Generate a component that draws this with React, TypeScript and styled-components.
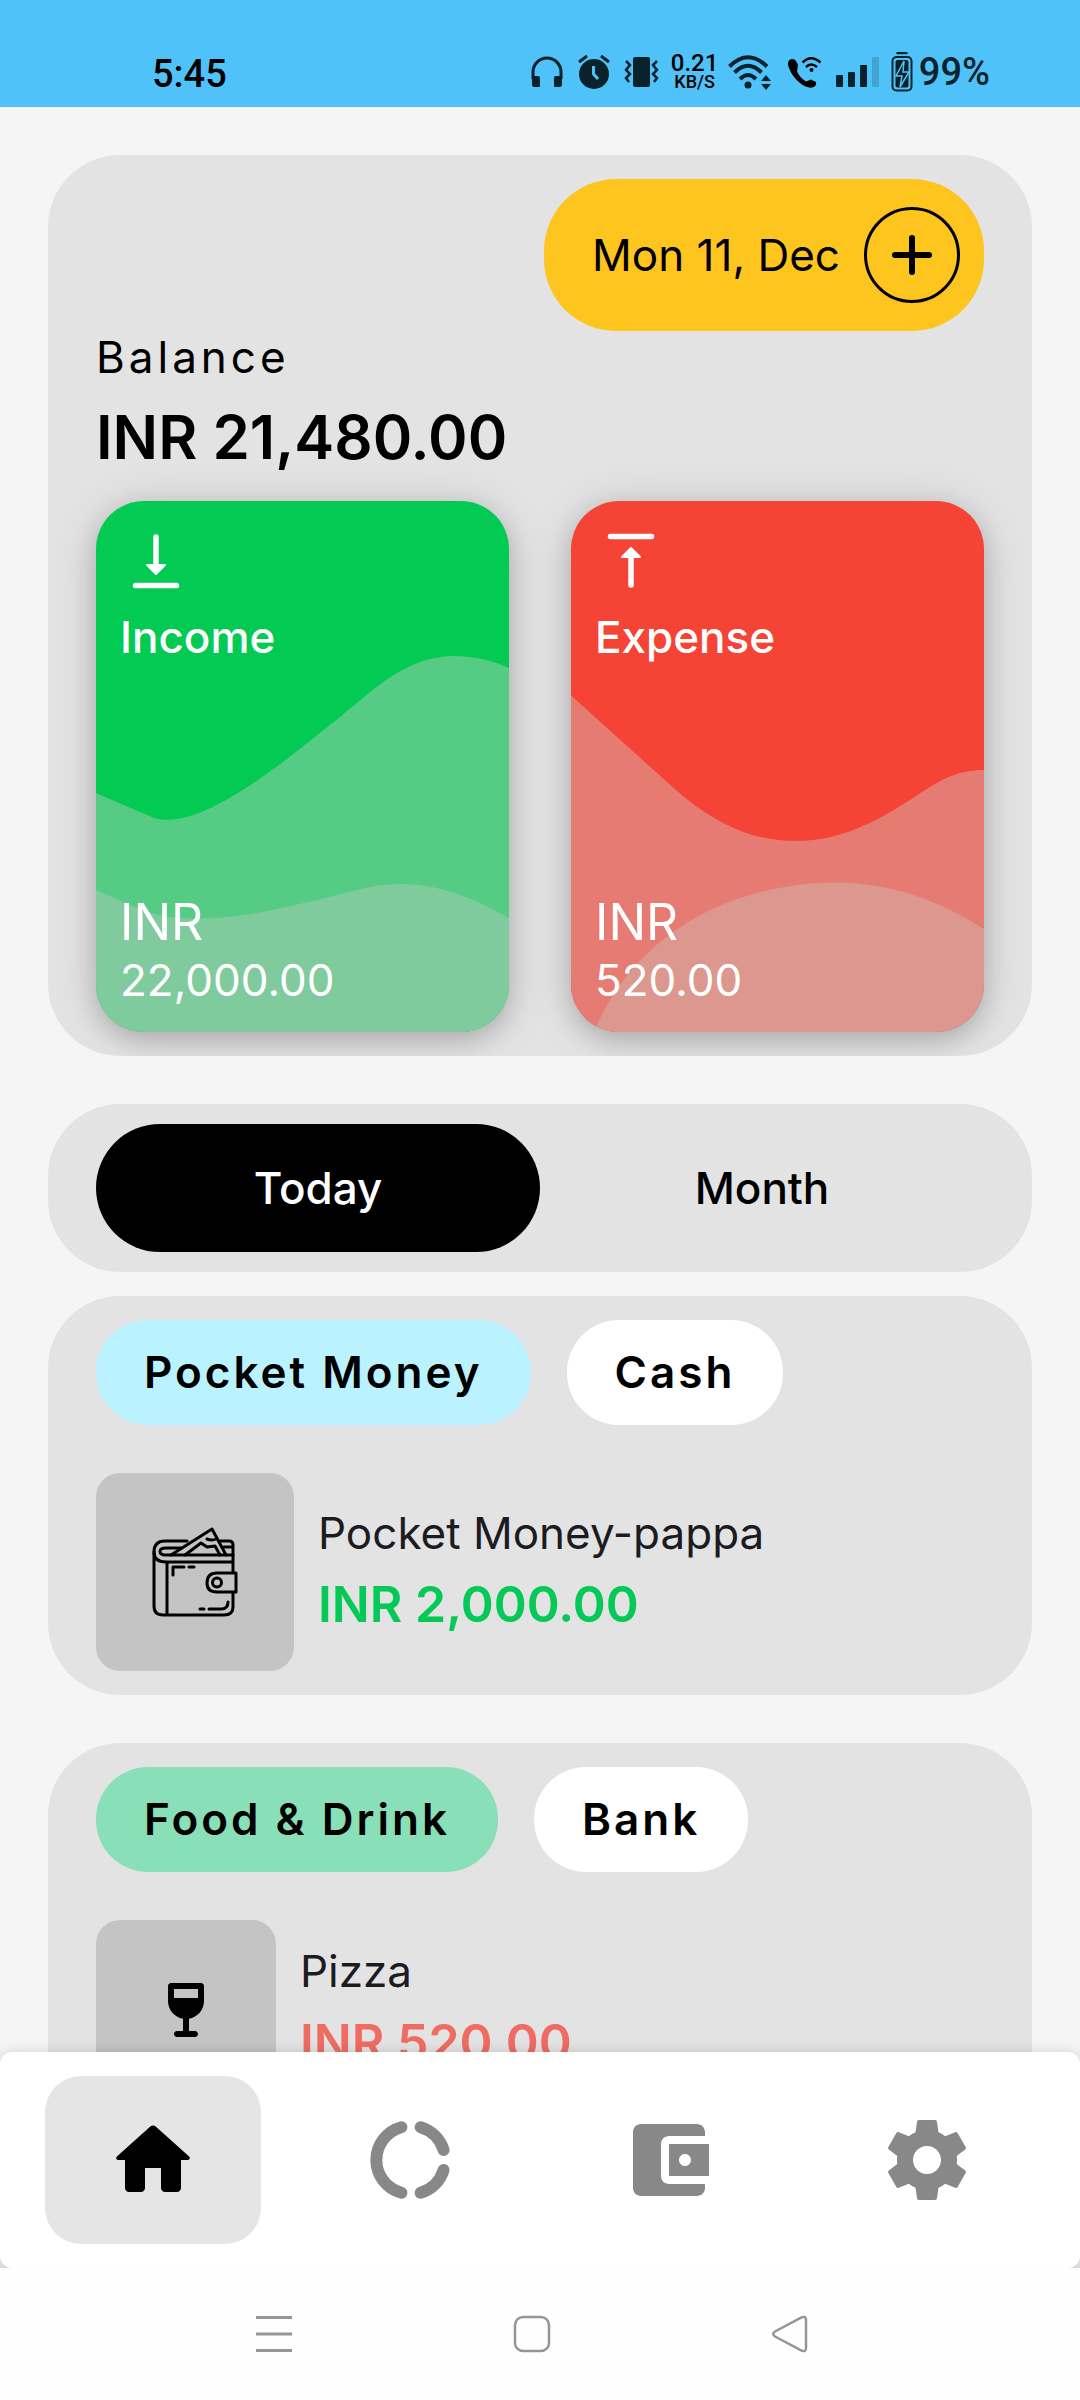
import React, { useState } from "react";
import styled, { createGlobalStyle } from "styled-components";

const sans = `Inter, "Noto Sans", "Liberation Sans", sans-serif`;
const system = `Roboto, "Noto Sans", "Liberation Sans", sans-serif`;

const GlobalStyle = createGlobalStyle`
  *, *::before, *::after { box-sizing: border-box; }
  body { margin: 0; background: #f5f5f5; font-family: ${sans}; color: #000; }
  h1, h2, p { margin: 0; font-weight: inherit; }
  button { margin: 0; padding: 0; border: 0; background: none; font: inherit; color: inherit; cursor: pointer; }
  svg { display: block; flex: none; }
`;

const Screen = styled.div`
  display: flex;
  flex-direction: column;
  height: 100vh;
  background: #f5f5f5;
`;

/* ---------- status bar ---------- */

const StatusBar = styled.header`
  display: flex;
  justify-content: space-between;
  align-items: flex-end;
  flex: none;
  height: 107px;
  padding: 0 90px 10px 152px;
  background: #4fc3f9;
  font-family: ${system};
`;

const Clock = styled.time`
  font-size: 38px;
  line-height: 46px;
  font-weight: 500;
`;

const StatusIcons = styled.div`
  display: flex;
  align-items: center;
  gap: 12px;
  height: 50px;
  color: #0a222c;
`;

const NetSpeed = styled.div`
  display: grid;
  justify-items: center;
  width: 44px;
  color: #000;
  font-weight: 500;
  white-space: nowrap;
`;

const SpeedValue = styled.div`
  font-size: 24px;
  line-height: 20px;
`;

const SpeedUnit = styled.div`
  font-size: 18px;
  line-height: 18px;
`;

const Battery = styled.div`
  display: flex;
  align-items: center;
  gap: 6px;
  font-size: 38px;
  line-height: 46px;
  font-weight: 500;
`;

/* ---------- content ---------- */

const Content = styled.main`
  flex: 1;
  min-height: 0;
  padding: 48px;
  overflow-y: auto;
  scrollbar-width: none;
`;

const Panel = styled.section`
  padding: 24px 48px;
  border-radius: 72px;
  background: #e3e3e3;
  overflow: hidden;
`;

const DateButton = styled.button`
  display: flex;
  align-items: center;
  gap: 24px;
  margin-left: auto;
  padding: 28px 24px 28px 48px;
  border-radius: 72px;
  background: #fdc51e;
  font-size: 44px;
  line-height: 60px;
`;

const PlusRing = styled.span`
  display: grid;
  place-items: center;
  width: 96px;
  height: 96px;
  border: 3px solid #000;
  border-radius: 50%;
`;

const BalanceLabel = styled.p`
  font-size: 44px;
  line-height: 52px;
  letter-spacing: 4px;
`;

const BalanceAmount = styled.h1`
  margin: 14px 0 24px;
  font-size: 60px;
  line-height: 80px;
  font-weight: 600;
`;

const Flows = styled.div`
  display: grid;
  grid-template-columns: 1fr 1fr;
  gap: 62px;
`;

const FlowCard = styled.article<{ $color: string }>`
  display: grid;
  aspect-ratio: 7 / 9;
  border-radius: 48px;
  overflow: hidden;
  background: ${(p) => p.$color};
  color: #fff;
  box-shadow: 0 8px 24px rgba(0, 0, 0, 0.18), 0 4px 48px rgba(0, 0, 0, 0.12);

  > * {
    grid-area: 1 / 1;
    min-height: 0;
  }
`;

const Waves = styled.svg`
  width: 100%;
  height: 100%;
`;

const FlowBody = styled.div`
  display: flex;
  flex-direction: column;
  padding: 24px;
  z-index: 1;
`;

const FlowTitle = styled.h2`
  margin: 10px 0 auto;
  font-size: 44px;
  line-height: 60px;
  font-weight: 500;
`;

const FlowCurrency = styled.div`
  font-size: 50px;
  line-height: 60px;
`;

const FlowValue = styled.div`
  font-size: 44px;
  line-height: 56px;
`;

const TabPanel = styled.div`
  display: flex;
  margin: 48px 0 24px;
  padding: 20px 48px;
  border-radius: 72px;
  background: #e3e3e3;
`;

const Tab = styled.button<{ $active: boolean }>`
  flex: 1;
  padding: 34px 0;
  border-radius: 64px;
  background: ${(p) => (p.$active ? "#000" : "transparent")};
  color: ${(p) => (p.$active ? "#fff" : "#000")};
  font-size: 44px;
  line-height: 60px;
  font-weight: 500;
`;

const Entries = styled.div`
  display: flex;
  flex-direction: column;
  gap: 48px;
`;

const Chips = styled.div`
  display: flex;
  gap: 36px;
  margin-bottom: 48px;
`;

const Chip = styled.span<{ $color: string }>`
  padding: 24px 48px;
  border-radius: 52px;
  background: ${(p) => p.$color};
  font-size: 44px;
  line-height: 57px;
  font-weight: 600;
  letter-spacing: 3px;
`;

const EntryRow = styled.div`
  display: flex;
  align-items: center;
  gap: 24px;
`;

const Thumb = styled.div`
  padding: 54px;
  border-radius: 24px;
  background: #c4c4c4;
`;

const EntryText = styled.div`
  display: flex;
  flex-direction: column;
  gap: 8px;
  padding-bottom: 4px;
`;

const EntryName = styled.h2`
  font-size: 44px;
  line-height: 60px;
  color: #1c1b1f;
`;

const EntryAmount = styled.p<{ $color: string }>`
  font-size: 50px;
  line-height: 66px;
  font-weight: 600;
  color: ${(p) => p.$color};
`;

/* ---------- bottom bars ---------- */

const NavWrap = styled.div`
  position: relative;
  flex: none;
`;

const NavBar = styled.nav`
  display: flex;
  gap: 42px;
  padding: 24px 45px;
  border-radius: 12px;
  background: #fff;
  box-shadow: 0 4px 16px rgba(0, 0, 0, 0.26);
`;

const NavItem = styled.button<{ $active: boolean }>`
  display: grid;
  place-items: center;
  flex: 1;
  height: 168px;
  border-radius: 36px;
  background: ${(p) => (p.$active ? "#e5e5e5" : "transparent")};
  color: ${(p) => (p.$active ? "#000" : "#888")};
`;

const SystemBar = styled.footer`
  position: relative;
  display: flex;
  justify-content: center;
  flex: none;
  padding-right: 16px;
  background: #fefefe;
`;

const SystemButton = styled.button`
  display: grid;
  place-items: center;
  width: 258px;
  height: 132px;
  color: #969696;
`;

/* ---------- drawings ---------- */

const Headphones = () => (
  <svg width="36" height="36" viewBox="0 0 36 36" fill="none">
    <path d="M4 25V18a14 14 0 0 1 28 0v7" stroke="currentColor" strokeWidth="3" />
    <path d="M3 22h6q2 0 2 2v8q0 1-1 1H5q-2 0-2-2zM33 22h-6q-2 0-2 2v8q0 1 1 1h5q2 0 2-2z" fill="currentColor" />
  </svg>
);

const Alarm = () => (
  <svg width="34" height="36" viewBox="0 0 34 36" fill="none">
    <circle cx="17" cy="20" r="15" fill="currentColor" />
    <path d="M2 8l8-6M32 8l-8-6" stroke="currentColor" strokeWidth="3" />
    <path d="M16.500 12v8l4.500 5" stroke="#4fc3f9" strokeWidth="3" />
  </svg>
);

const Vibrate = () => (
  <svg width="36" height="32" viewBox="0 0 36 32" fill="none" stroke="currentColor" strokeWidth="2.500">
    <rect x="10" y="1" width="17" height="30" rx="2" fill="currentColor" stroke="none" />
    <path d="M3 5l4 4-4 5 4 4-4 4 3 4M34 5l-4 4 4 5-4 4 4 4-3 4" />
  </svg>
);

const Wifi = () => (
  <svg width="46" height="36" viewBox="0 0 46 36" fill="none" stroke="currentColor" strokeWidth="4">
    <path d="M2.500 12.500Q21 -6 40 12.500M7.500 18.500Q21 5 34.500 18.500M13 25Q21 17 29 25" />
    <circle cx="21" cy="31" r="3.500" fill="currentColor" stroke="none" />
    <path d="M34 27l5-6 5 6zM34 30l5 6 5-6z" fill="currentColor" stroke="none" />
  </svg>
);

const WifiCall = () => (
  <svg width="38" height="34" viewBox="0 0 38 34" fill="none" stroke="#000">
    <path
      d="M7.500 4C3 4 2 8 4 13C7 21 14 29 22 32C28 34 32 31 31 27L26 24.500L21 26.500C17 24 14 21 12 16.500L13 10C11.500 6 10 4 7.500 4Z"
      fill="#000"
      stroke="none"
    />
    <path d="M17.500 7.500Q26 -1 35.500 7.500M21 12Q26 7 32 12" strokeWidth="2.500" />
    <circle cx="26.500" cy="15" r="2" fill="#000" stroke="none" />
  </svg>
);

const Signal = () => (
  <svg width="44" height="32" viewBox="0 0 44 32" fill="currentColor">
    <rect x="1" y="19" width="7" height="12" rx="1" />
    <rect x="13" y="16" width="7" height="15" rx="1" />
    <rect x="25" y="9" width="7" height="22" rx="1" />
    <rect x="37" y="1" width="7" height="30" rx="1" opacity="0.2" />
  </svg>
);

const BatteryIcon = () => (
  <svg width="22" height="40" viewBox="0 0 22 40" fill="none">
    <path d="M5.500 1h11" stroke="currentColor" strokeWidth="2.500" />
    <rect x="1.500" y="5" width="19" height="33.500" rx="4" stroke="currentColor" strokeWidth="2" />
    <rect x="4.500" y="8" width="13" height="27.500" rx="2" fill="currentColor" />
    <path d="M13 9L5 24h6l-2 11 9-15h-6z" fill="currentColor" stroke="#4fc3f9" strokeWidth="1.500" />
  </svg>
);

const Plus = () => (
  <svg width="48" height="48" viewBox="0 0 48 48" stroke="#000" strokeWidth="6" strokeLinecap="round">
    <path d="M24 7v34M7 24h34" />
  </svg>
);

const ArrowIn = () => (
  <svg width="72" height="72" viewBox="0 0 72 72" fill="#fff" stroke="#fff" strokeLinecap="round">
    <path d="M36 12v28M15.500 60.500h41" strokeWidth="5.500" />
    <path d="M27 40h18l-9 9z" strokeWidth="2" strokeLinejoin="round" />
  </svg>
);

const ArrowOut = () => (
  <svg width="72" height="72" viewBox="0 0 72 72" fill="#fff" stroke="#fff" strokeLinecap="round">
    <path d="M36 60V32M15.500 11.500h41" strokeWidth="5.500" />
    <path d="M27 32h18l-9-9z" strokeWidth="2" strokeLinejoin="round" />
  </svg>
);

const WalletOutline = () => (
  <svg width="90" height="90" viewBox="0 0 90 90" fill="none" stroke="#000" strokeWidth="3" strokeLinecap="round" strokeLinejoin="round">
    <path d="M37 14H15Q4 14 4 25V79Q4 88 13 88H74Q83 88 83 80V66" />
    <path d="M4 25Q4 35 16 35H83V45M83 35V18Q83 14 79 14H70" />
    <path d="M31 21H16Q10 21 10 24.500Q10 28 16 28H83M74 20H82" />
    <path d="M17 36V87" />
    <path d="M21 28L62 2L76 28M35 28L51 16L57 20L65 19L70 28M57 12Q62 14 66 12" />
    <path d="M86 46H67Q57 46 57 56Q57 65 67 65H86Z" fill="#c4c4c4" />
    <circle cx="67" cy="55.500" r="4.500" />
    <path d="M23 48V40H34M39 40H44M50 82H54M59 82H71Q78 82 78 75" />
  </svg>
);

const WineGlass = () => (
  <svg width="72" height="72" viewBox="0 0 24 24">
    <path d="M7 3c-.55 0-1 .45-1 1v5c0 2.970 2.160 5.430 5 5.910V19H9c-.55 0-1 .45-1 1s.45 1 1 1h6c.55 0 1-.45 1-1s-.45-1-1-1h-2v-4.090c2.840-.48 5-2.940 5-5.910V4c0-.55-.45-1-1-1H7zm9 5H8V5h8v3z" />
  </svg>
);

const HomeIcon = () => (
  <svg width="96" height="96" viewBox="0 0 24 24" fill="currentColor">
    <path d="M10 19v-5h4v5c0 .55.45 1 1 1h3c.55 0 1-.45 1-1v-7h1.700c.46 0 .68-.57.33-.87L12.670 3.600c-.38-.34-.96-.34-1.340 0l-8.360 7.530c-.34.3-.13.87.33.87H5v7c0 .55.45 1 1 1h3c.55 0 1-.45 1-1z" />
  </svg>
);

const DonutIcon = () => (
  <svg width="96" height="96" viewBox="0 0 24 24" fill="none" stroke="currentColor" strokeWidth="3" strokeLinecap="round">
    <path d="M9.600 3.800A8.500 8.500 0 0 0 9.600 20.200M14.400 3.800A8.500 8.500 0 0 1 20.150 9.500M20.150 14.500A8.500 8.500 0 0 1 14.400 20.200" />
  </svg>
);

const WalletIcon = () => (
  <svg width="96" height="96" viewBox="0 0 24 24" fill="currentColor">
    <path d="M21 18v1c0 1.100-.9 2-2 2H5c-1.110 0-2-.9-2-2V5c0-1.100.89-2 2-2h14c1.100 0 2 .9 2 2v1h-9c-1.110 0-2 .9-2 2v8c0 1.100.89 2 2 2h9zm-9-2h10V8H12v8zm4-2.500c-.83 0-1.500-.67-1.500-1.500s.67-1.500 1.500-1.500 1.500.67 1.500 1.500-.67 1.500-1.500 1.500z" />
  </svg>
);

const GearIcon = () => (
  <svg width="96" height="96" viewBox="0 0 24 24" fill="currentColor">
    <path d="M19.430 12.980c.04-.32.07-.64.07-.98s-.03-.66-.07-.98l2.110-1.650c.19-.15.24-.42.12-.64l-2-3.460c-.12-.22-.39-.3-.61-.22l-2.490 1c-.52-.4-1.080-.73-1.690-.98l-.38-2.650C14.460 2.180 14.250 2 14 2h-4c-.25 0-.46.18-.49.42l-.38 2.650c-.61.25-1.170.59-1.690.98l-2.490-1c-.23-.09-.49 0-.61.22l-2 3.460c-.13.22-.07.49.12.64l2.110 1.650c-.04.32-.07.65-.07.98s.03.66.07.98l-2.110 1.650c-.19.15-.24.42-.12.64l2 3.460c.12.22.39.3.61.22l2.490-1c.52.4 1.080.73 1.690.98l.38 2.650c.03.24.24.42.49.42h4c.25 0 .46-.18.49-.42l.38-2.650c.61-.25 1.170-.59 1.690-.98l2.490 1c.23.09.49 0 .61-.22l2-3.460c.12-.22.07-.49-.12-.64l-2.110-1.650zM12 15.500c-1.930 0-3.500-1.570-3.500-3.500s1.570-3.500 3.500-3.500 3.500 1.570 3.500 3.500-1.570 3.500-3.500 3.500z" />
  </svg>
);

const RecentsIcon = () => (
  <svg width="38" height="38" viewBox="0 0 38 38" stroke="currentColor" strokeWidth="3">
    <path d="M1 2.500h36M1 19h36M1 35.500h36" />
  </svg>
);

const SquareIcon = () => (
  <svg width="38" height="38" viewBox="0 0 38 38" fill="none" stroke="currentColor" strokeWidth="2.500">
    <rect x="2" y="2" width="34" height="34" rx="8" />
  </svg>
);

const BackIcon = () => (
  <svg width="38" height="38" viewBox="0 0 38 38" fill="none" stroke="currentColor" strokeWidth="2.500">
    <path d="M30.500 2.500Q35 0.500 35 5V33Q35 37.500 30.500 35.500L4 21.500Q0.500 19 4 16.500Z" />
  </svg>
);

/* ---------- data ---------- */

const flows = [
  {
    title: "Income",
    value: "22,000.00",
    color: "#02ca52",
    icon: <ArrowIn />,
    waves: [
      { fill: "#55cb84", d: "M0 292L57 316.500C105 333 193 256 244 216C281 186 311 155 359 155Q387 155 413 167V531H0Z" },
      { fill: "#80cb9e", d: "M0 389L41 407C96 430 170 412 257 390C310 375 355 384 413 417V531H0Z" },
    ],
  },
  {
    title: "Expense",
    value: "520.00",
    color: "#f54336",
    icon: <ArrowOut />,
    waves: [
      { fill: "#e67b73", d: "M0 194.500L96 281C135 317 175 340 224 340C279 340 319 312 362 284Q386 269 413 269V531H0Z" },
      { fill: "#dc988f", d: "M23 531C60 440 150 381.500 269 381.500Q343 383 413 428V531Z" },
    ],
  },
];

const entries = [
  {
    category: "Pocket Money",
    categoryColor: "#baf3ff",
    account: "Cash",
    name: "Pocket Money-pappa",
    amount: "INR 2,000.00",
    amountColor: "#04c957",
    icon: <WalletOutline />,
  },
  {
    category: "Food & Drink",
    categoryColor: "#88dfb8",
    account: "Bank",
    name: "Pizza",
    amount: "INR 520.00",
    amountColor: "#ef6c62",
    icon: <WineGlass />,
  },
];

const navItems = [
  { label: "Home", icon: <HomeIcon /> },
  { label: "Statistics", icon: <DonutIcon /> },
  { label: "Accounts", icon: <WalletIcon /> },
  { label: "Settings", icon: <GearIcon /> },
];

export default function App() {
  const [period, setPeriod] = useState("Today");
  const [page, setPage] = useState("Home");

  return (
    <Screen>
      <GlobalStyle />
      <StatusBar>
        <Clock>5:45</Clock>
        <StatusIcons>
          <Headphones />
          <Alarm />
          <Vibrate />
          <NetSpeed>
            <SpeedValue>0.21</SpeedValue>
            <SpeedUnit>KB/S</SpeedUnit>
          </NetSpeed>
          <Wifi />
          <WifiCall />
          <Signal />
          <Battery>
            <BatteryIcon />
            99%
          </Battery>
        </StatusIcons>
      </StatusBar>

      <Content>
        <Panel>
          <DateButton>
            Mon 11, Dec
            <PlusRing>
              <Plus />
            </PlusRing>
          </DateButton>
          <BalanceLabel>Balance</BalanceLabel>
          <BalanceAmount>INR 21,480.00</BalanceAmount>
          <Flows>
            {flows.map((flow) => (
              <FlowCard key={flow.title} $color={flow.color}>
                <Waves viewBox="0 0 413 531" preserveAspectRatio="none" aria-hidden="true">
                  {flow.waves.map((wave) => (
                    <path key={wave.fill} d={wave.d} fill={wave.fill} />
                  ))}
                </Waves>
                <FlowBody>
                  {flow.icon}
                  <FlowTitle>{flow.title}</FlowTitle>
                  <FlowCurrency>INR</FlowCurrency>
                  <FlowValue>{flow.value}</FlowValue>
                </FlowBody>
              </FlowCard>
            ))}
          </Flows>
        </Panel>

        <TabPanel role="tablist">
          {["Today", "Month"].map((name) => (
            <Tab key={name} role="tab" aria-selected={period === name} $active={period === name} onClick={() => setPeriod(name)}>
              {name}
            </Tab>
          ))}
        </TabPanel>

        <Entries>
          {entries.map((entry) => (
            <Panel key={entry.name}>
              <Chips>
                <Chip $color={entry.categoryColor}>{entry.category}</Chip>
                <Chip $color="#fff">{entry.account}</Chip>
              </Chips>
              <EntryRow>
                <Thumb>{entry.icon}</Thumb>
                <EntryText>
                  <EntryName>{entry.name}</EntryName>
                  <EntryAmount $color={entry.amountColor}>{entry.amount}</EntryAmount>
                </EntryText>
              </EntryRow>
            </Panel>
          ))}
        </Entries>
      </Content>

      <NavWrap>
        <NavBar>
          {navItems.map((item) => (
            <NavItem key={item.label} aria-label={item.label} $active={page === item.label} onClick={() => setPage(item.label)}>
              {item.icon}
            </NavItem>
          ))}
        </NavBar>
      </NavWrap>
      <SystemBar>
        <SystemButton aria-label="Recent apps">
          <RecentsIcon />
        </SystemButton>
        <SystemButton aria-label="Home screen">
          <SquareIcon />
        </SystemButton>
        <SystemButton aria-label="Back">
          <BackIcon />
        </SystemButton>
      </SystemBar>
    </Screen>
  );
}
